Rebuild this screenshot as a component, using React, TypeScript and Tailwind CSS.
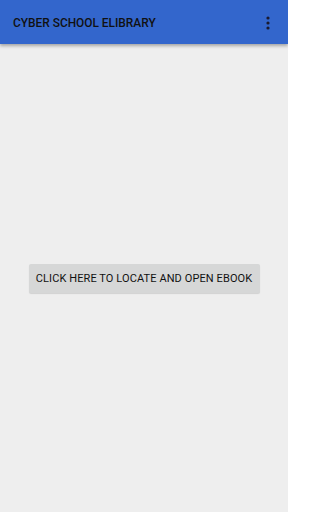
import React from "react";

export default function App() {
  return (
    <div className="w-[288px] h-[512px] flex flex-col bg-[#eeeeee] overflow-hidden" style={{ fontFamily: "Roboto, 'Liberation Sans', sans-serif" }}>
      <div className="h-[44px] shrink-0 bg-[#3366cc] flex items-center justify-between pl-[13px] pr-[18px] shadow-[0_2px_3px_rgba(0,0,0,0.3)] relative z-10">
        <span className="text-[11.9px] font-medium text-[#111111] pt-[3px]">CYBER SCHOOL ELIBRARY</span>
        <svg width="4" height="14" viewBox="0 0 4 14" className="mt-[1px]">
          <circle cx="2" cy="2" r="1.6" fill="#1a1a2e" />
          <circle cx="2" cy="7" r="1.6" fill="#1a1a2e" />
          <circle cx="2" cy="12" r="1.6" fill="#1a1a2e" />
        </svg>
      </div>
      <div className="flex-1 flex items-center justify-center">
        <button className="w-[231px] h-[29px] bg-[#d6d7d7] rounded-[2px] shadow-[0_1px_1px_rgba(0,0,0,0.12)] text-[11px] font-normal tracking-[0.1px] text-[#111111] flex items-center justify-center pt-[2px]">
          CLICK HERE TO LOCATE AND OPEN EBOOK
        </button>
      </div>
    </div>
  );
}
